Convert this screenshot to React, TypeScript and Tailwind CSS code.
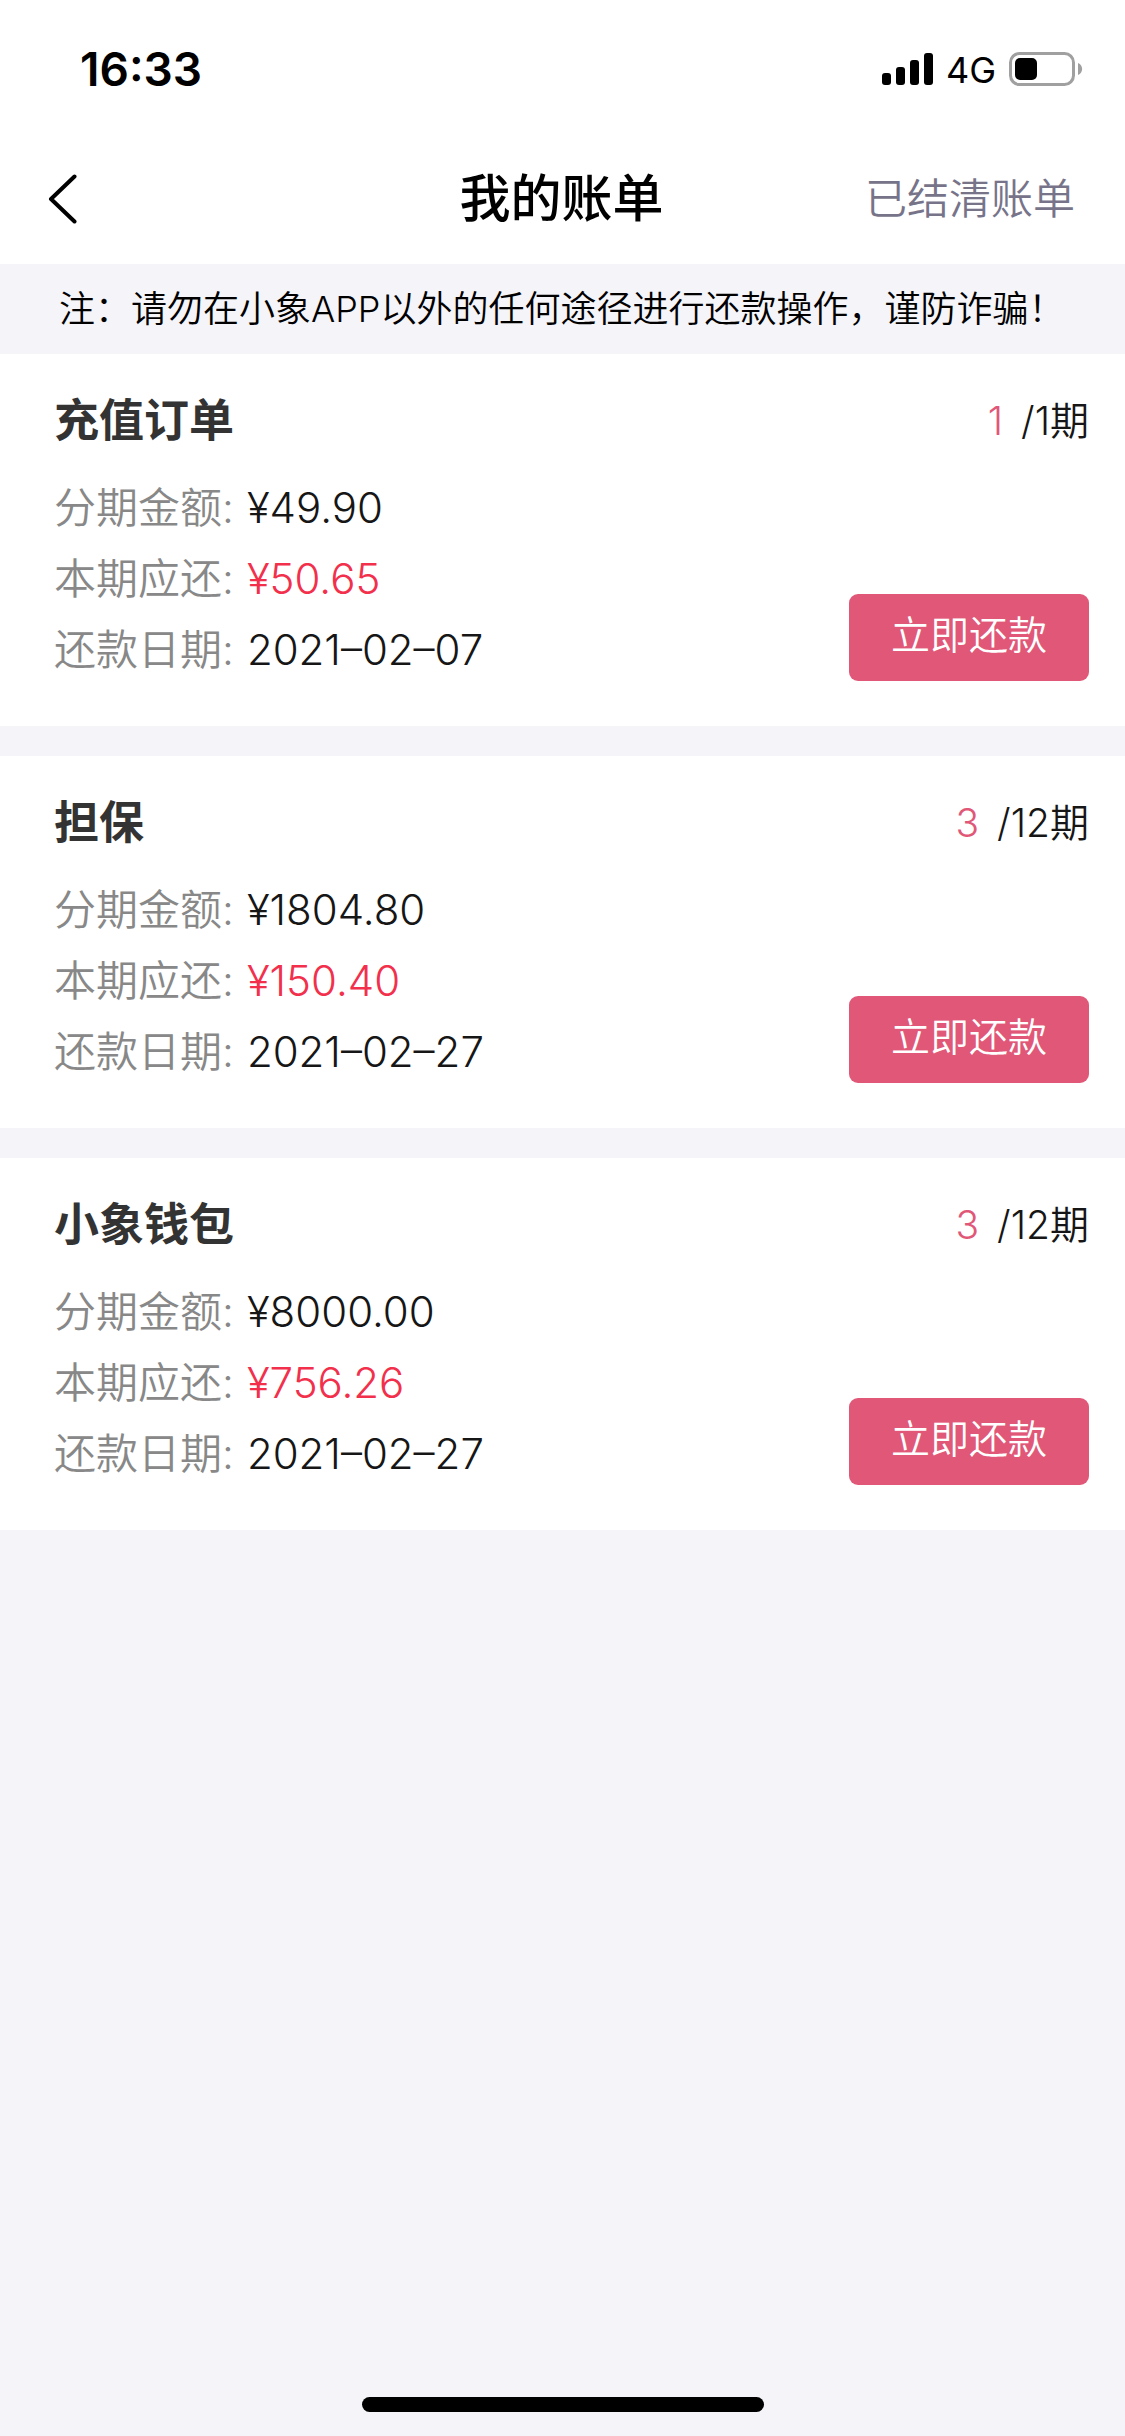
type Bill = {
  title: string;
  current: number;
  total: number;
  amount: string;
  due: string;
  date: string;
};

const bills: Bill[] = [
  { title: "充值订单", current: 1, total: 1, amount: "¥49.90", due: "¥50.65", date: "2021–02–07" },
  { title: "担保", current: 3, total: 12, amount: "¥1804.80", due: "¥150.40", date: "2021–02–27" },
  { title: "小象钱包", current: 3, total: 12, amount: "¥8000.00", due: "¥756.26", date: "2021–02–27" },
];

function StatusBar() {
  return (
    <div className="flex h-[132px] items-center justify-between bg-white pt-[6px] pr-[42px] pl-[80px] text-black">
      <span className="text-[46px] leading-[54px] font-semibold">16:33</span>
      <div className="flex items-center">
        <svg width="51" height="32" viewBox="0 0 51 32" aria-label="信号">
          <rect x="0" y="20" width="9" height="12" rx="3" />
          <rect x="14" y="14" width="9" height="18" rx="3" />
          <rect x="28" y="7" width="9" height="25" rx="3" />
          <rect x="42" y="0" width="9" height="32" rx="3" />
        </svg>
        <span className="pt-[2px] pr-[13px] pl-[13px] text-[36px] leading-[40px]">4G</span>
        <svg width="74" height="34" viewBox="0 0 74 34" aria-label="电量">
          <rect x="1.5" y="1.5" width="63" height="31" rx="9" fill="none" stroke="#a0a0a0" strokeWidth="3" />
          <rect x="6" y="6" width="22" height="22" rx="5" />
          <path d="M69 11c5.500 2 5.500 10 0 12z" fill="#a0a0a0" />
        </svg>
      </div>
    </div>
  );
}

function Header() {
  return (
    <header className="grid h-[132px] grid-cols-[1fr_auto_1fr] items-center bg-white pt-[2px] pr-[50px] pl-[48px]">
      <button type="button" aria-label="返回" className="justify-self-start">
        <svg width="29" height="50" viewBox="0 0 29 50" fill="none" stroke="#000" strokeWidth="4" strokeLinecap="round" strokeLinejoin="round">
          <path d="M26.500 2.500 3 25l23.500 22.500" />
        </svg>
      </button>
      <h1 className="text-[51px] leading-[60px] font-medium text-black">我的账单</h1>
      <a href="#settled" className="justify-self-end text-[42px] leading-[60px] font-[350] text-[#77748a]">
        已结清账单
      </a>
    </header>
  );
}

function Row({ label, value, highlight = false }: { label: string; value: string; highlight?: boolean }) {
  return (
    <div className="flex gap-[13px]">
      <dt className="text-[#888888]">{label}:</dt>
      <dd className={highlight ? "text-[#f2304c]" : "text-[#161616]"}>{value}</dd>
    </div>
  );
}

function BillCard({ bill }: { bill: Bill }) {
  return (
    <section className="bg-white pt-[37px] pr-[36px] pb-[39px] pl-[54px]">
      <div className="flex items-center justify-between">
        <h2 className="text-[45px] leading-[60px] font-bold text-[#333333]">{bill.title}</h2>
        <p className="flex gap-[18px] text-[39px] leading-[60px] font-[350] text-[#161616]">
          <span className="text-[#e15777]">{bill.current}</span>
          <span>/{bill.total}期</span>
        </p>
      </div>
      <div className="flex items-end justify-between pt-[21px]">
        <dl className="pb-[2px] text-[42px] leading-[71px] font-[350]">
          <Row label="分期金额" value={bill.amount} />
          <Row label="本期应还" value={bill.due} highlight />
          <Row label="还款日期" value={bill.date} />
        </dl>
        <button
          type="button"
          className="mb-[6px] h-[87px] w-[240px] rounded-[9px] bg-[#e15777] pb-[6px] text-[39px] leading-[60px] font-[350] text-white"
        >
          立即还款
        </button>
      </div>
    </section>
  );
}

export default function App() {
  return (
    <div className="flex min-h-screen flex-col bg-[#f4f4f9] font-['Inter','Noto_Sans_CJK_SC',sans-serif]" lang="zh-CN">
      <StatusBar />
      <Header />
      <p className="h-[90px] pl-[59px] text-[36px] leading-[90px] font-[350] text-black">
        注：请勿在小象APP以外的任何途径进行还款操作，谨防诈骗！
      </p>
      <main className="flex grow flex-col gap-[30px]">
        {bills.map((bill) => (
          <BillCard key={bill.title} bill={bill} />
        ))}
      </main>
      <div className="flex justify-center pb-[24px]">
        <div className="h-[15px] w-[402px] rounded-full bg-black" />
      </div>
    </div>
  );
}
